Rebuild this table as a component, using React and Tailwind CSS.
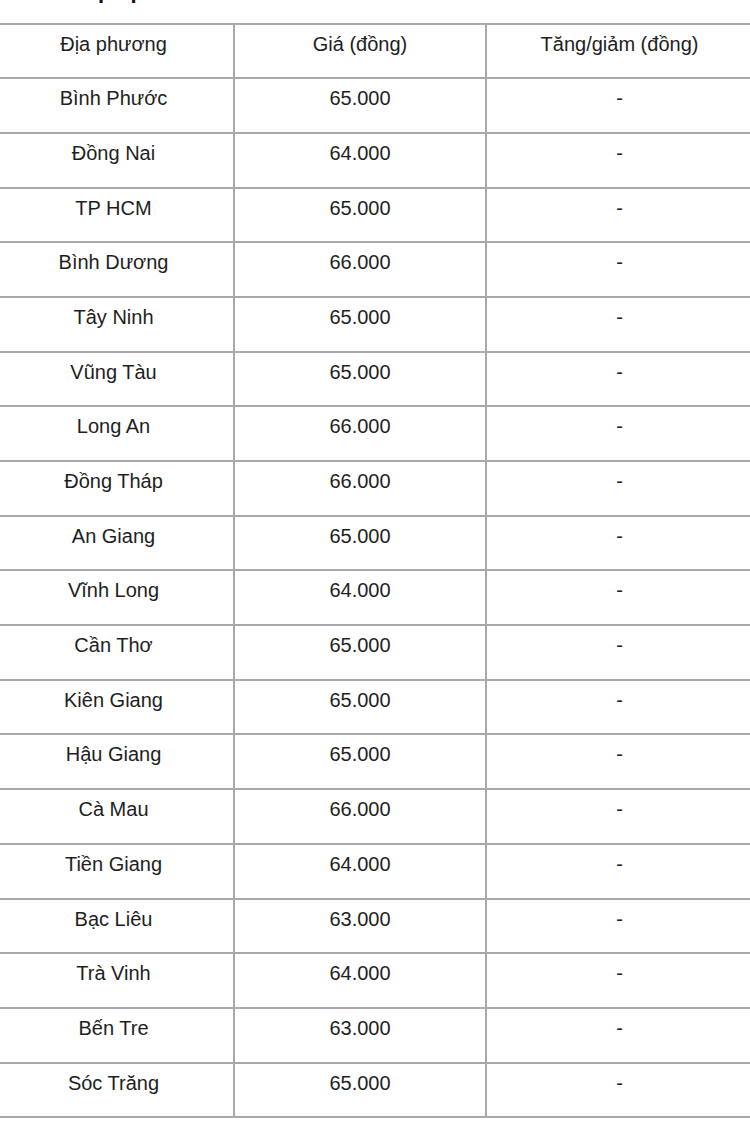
import React from "react";

const rows = [
  ["Bình Phước", "65.000"],
  ["Đồng Nai", "64.000"],
  ["TP HCM", "65.000"],
  ["Bình Dương", "66.000"],
  ["Tây Ninh", "65.000"],
  ["Vũng Tàu", "65.000"],
  ["Long An", "66.000"],
  ["Đồng Tháp", "66.000"],
  ["An Giang", "65.000"],
  ["Vĩnh Long", "64.000"],
  ["Cần Thơ", "65.000"],
  ["Kiên Giang", "65.000"],
  ["Hậu Giang", "65.000"],
  ["Cà Mau", "66.000"],
  ["Tiền Giang", "64.000"],
  ["Bạc Liêu", "63.000"],
  ["Trà Vinh", "64.000"],
  ["Bến Tre", "63.000"],
  ["Sóc Trăng", "65.000"],
];

const td =
  "border-2 border-[#a9a9a9] text-center align-top pt-[7px] leading-[24px] h-[54.7px] p-0";

export default function App() {
  return (
    <div
      className="w-[750px] h-[1131px] overflow-hidden bg-white text-[#1e1e1e] text-[20px]"
      style={{ fontFamily: '"Liberation Sans", Arial, sans-serif' }}
    >
      <div className="h-[22.5px] overflow-hidden flex font-bold text-[22px] leading-[22px] text-[#111]">
        <span className="ml-[98px] -mt-[20px]">p</span>
        <span className="ml-[19px] -mt-[20px]">p</span>
      </div>
      <table className="table-fixed border-collapse ml-[-8px] w-[760px]">
        <colgroup>
          <col className="w-[241px]" />
          <col className="w-[252px]" />
          <col className="w-[267px]" />
        </colgroup>
        <thead>
          <tr>
            <td className={td}>Địa phương</td>
            <td className={td}>Giá (đồng)</td>
            <td className={td}>Tăng/giảm (đồng)</td>
          </tr>
        </thead>
        <tbody>
          {rows.map(([name, price]) => (
            <tr key={name}>
              <td className={td}>{name}</td>
              <td className={td}>{price}</td>
              <td className={td}>-</td>
            </tr>
          ))}
        </tbody>
      </table>
    </div>
  );
}
